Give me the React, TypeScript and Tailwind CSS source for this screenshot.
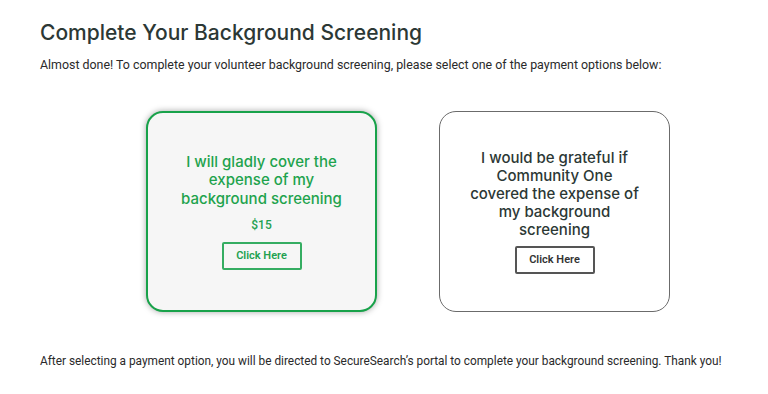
export default function App() {
  return (
    <div className="h-[394px] w-[768px] overflow-hidden bg-white px-10 pt-[19px] text-[#2b2b2b]" style={{ fontFamily: 'Roboto, "Liberation Sans", sans-serif' }}>
      <h1 className="text-[21px] font-medium leading-[28px] text-[#2c3835]" style={{ fontFamily: 'Inter, "Noto Sans", sans-serif' }}>
        Complete Your Background Screening
      </h1>
      <p className="mt-[10px] text-[12.4px] leading-[16px] text-[#2a2a2a]">
        Almost done! To complete your volunteer background screening, please select one of the payment options below:
      </p>

      <div className="mt-[38px] flex gap-[62px] pl-[106px]">
        <div className="flex h-[201px] w-[231px] flex-col items-center justify-center rounded-[17px] border-[2.5px] border-[#18a24a] bg-[#f6f6f6] shadow-[0_0_6px_rgba(0,0,0,0.35)]">
          <div className="w-[175px] text-center text-[15px] font-medium leading-[18.5px] text-[#1ea34d]" style={{ fontFamily: 'Inter, "Noto Sans", sans-serif' }}>
            I will gladly cover the expense of my background screening
          </div>
          <div className="mt-[10px] text-[12px] font-medium leading-[14px] text-[#23a150]">$15</div>
          <button className="mt-[10px] h-[28px] w-[80px] rounded-[2px] border-2 border-[#35ad62] text-[11px] font-semibold text-[#23a150]">
            Click Here
          </button>
        </div>

        <div className="flex h-[201px] w-[231px] flex-col items-center justify-center rounded-[17px] border border-[#6b6b6b] bg-white">
          <div className="w-[170px] text-center text-[15px] font-medium leading-[18px] text-[#2c3835]" style={{ fontFamily: 'Inter, "Noto Sans", sans-serif' }}>
            I would be grateful if Community One covered the expense of my background screening
          </div>
          <button className="mt-[7px] h-[28px] w-[80px] rounded-[2px] border-2 border-[#555] text-[11px] font-semibold text-[#333]">
            Click Here
          </button>
        </div>
      </div>

      <p className="mt-[41px] whitespace-nowrap text-[11.85px] leading-[16px] text-[#2a2a2a]">
        After selecting a payment option, you will be directed to SecureSearch’s portal to complete your background screening. Thank you!
      </p>
    </div>
  );
}
